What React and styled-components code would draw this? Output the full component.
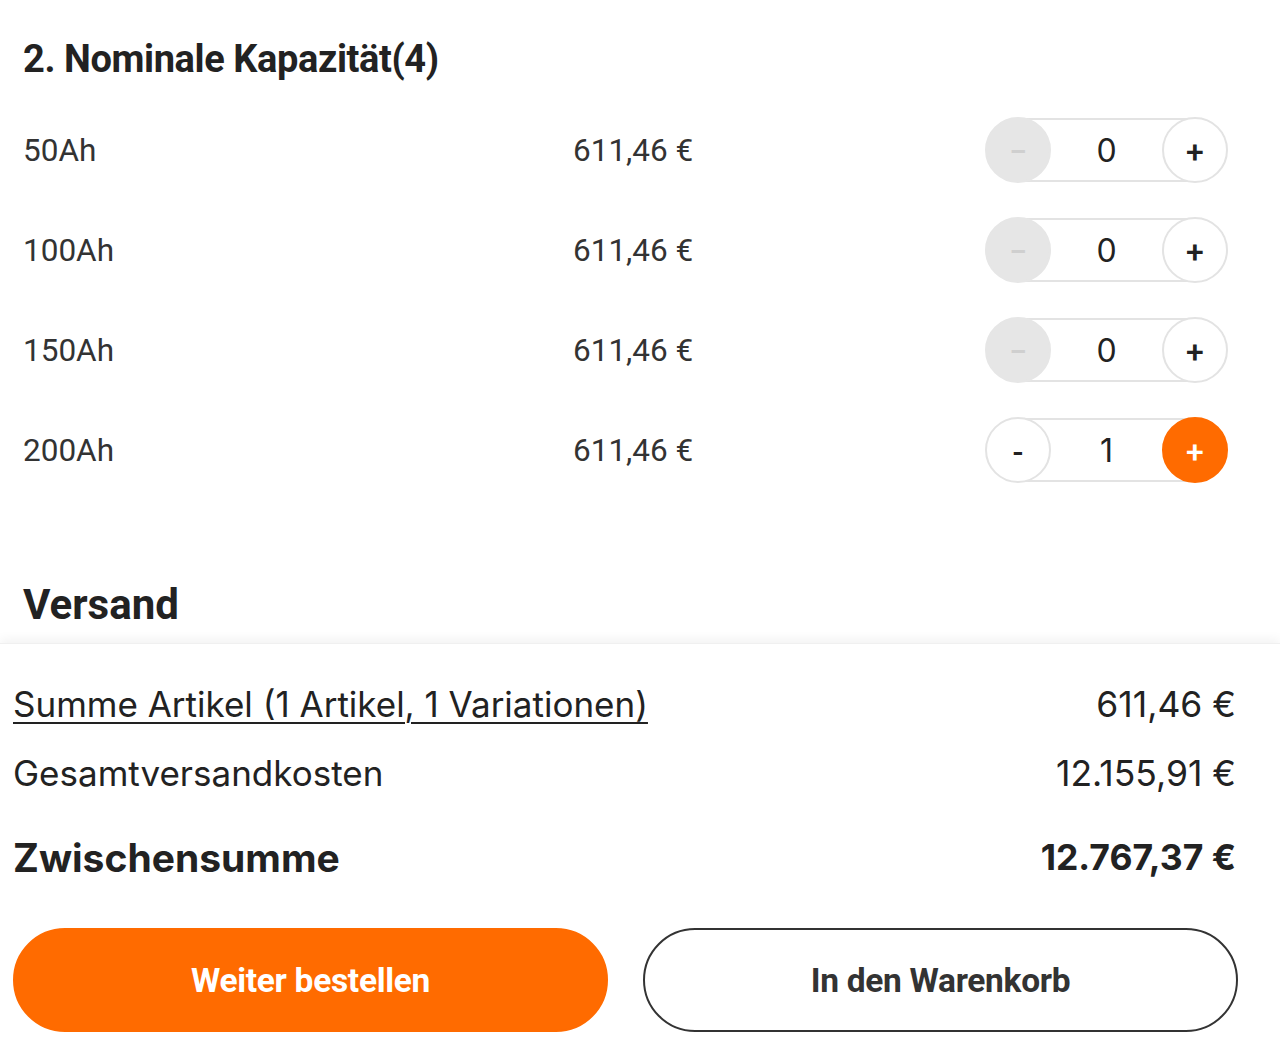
import React, { useState } from 'react';
import styled, { createGlobalStyle } from 'styled-components';

const GlobalStyle = createGlobalStyle`
	html, body {
		margin: 0;
		padding: 0;
		background: #fff;
	}
	body {
		font-family: Roboto, "Liberation Sans", sans-serif;
		color: #222;
	}
`;

const Page = styled.div`
	width: 1280px;
	height: 1049px;
	display: flex;
	flex-direction: column;
	overflow: hidden;
`;

const Options = styled.section`
	padding: 24px 53px 13px 23px;
`;

const Title = styled.h2`
	margin: 0 0 6px;
	height: 70px;
	line-height: 70px;
	font-size: 38px;
	font-weight: 700;
	letter-spacing: -0.4px;
	color: #222;
`;

const Row = styled.div`
	display: grid;
	grid-template-columns: 550px 1fr auto;
	align-items: center;
	height: 100px;
`;

const Label = styled.span`
	font-size: 31.5px;
	color: #333;
`;

const Stepper = styled.div`
	display: flex;
	align-items: center;
	justify-content: space-between;
	width: 241px;
	height: 64px;
	box-sizing: border-box;
	border: 2px solid #e3e3e3;
	border-radius: 32px;
`;

const StepButton = styled.button`
	width: 66px;
	height: 66px;
	margin: -3px;
	box-sizing: border-box;
	border-radius: 50%;
	border: 2px solid ${p => (p.$active ? '#ff6b00' : p.$disabled ? '#e6e6e6' : '#e3e3e3')};
	background: ${p => (p.$active ? '#ff6b00' : p.$disabled ? '#e6e6e6' : '#fff')};
	color: ${p => (p.$active ? '#fff' : p.$disabled ? '#cfcfcf' : '#222')};
	font-family: Roboto, sans-serif;
	font-size: 32px;
	font-weight: 500;
	line-height: 1;
	padding: 4px 0 0;
	display: flex;
	align-items: center;
	justify-content: center;
	cursor: pointer;
`;

const Count = styled.span`
	font-family: Inter, sans-serif;
	font-size: 32px;
	color: #222;
`;

const Heading = styled.h3`
	margin: 80px 0 0;
	height: 50px;
	line-height: 50px;
	font-size: 42px;
	font-weight: 700;
	color: #222;
`;

const Summary = styled.footer`
	flex: 1;
	padding: 37px 44px 0 13px;
	box-shadow: 0 -4px 10px rgba(0, 0, 0, 0.05);
	border-top: 1px solid #f0f0f0;
	font-family: Inter, sans-serif;
	color: #222;
`;

const SumRow = styled.div`
	display: flex;
	justify-content: space-between;
	align-items: center;
	height: ${p => (p.$total ? '52px' : '46px')};
	margin-top: ${p => p.$gap || 0}px;
	font-size: ${p => (p.$total ? '39px' : '35px')};
	font-weight: ${p => (p.$total ? 700 : 400)};
	color: #222;
`;

const LinkText = styled.a`
	color: #222;
	text-decoration: underline;
	text-underline-offset: 5px;
	text-decoration-thickness: 2px;
`;

const Amount = styled.span`
	font-size: 35.5px;
`;

const Actions = styled.div`
	display: flex;
	gap: 35px;
	margin-top: 45px;
	margin-right: -2px;
`;

const ActionButton = styled.button`
	flex: 1;
	height: 104px;
	border-radius: 52px;
	box-sizing: border-box;
	border: 2px solid ${p => (p.$primary ? '#ff6b00' : '#333')};
	background: ${p => (p.$primary ? '#ff6b00' : '#fff')};
	color: ${p => (p.$primary ? '#fff' : '#333')};
	font-family: Roboto, sans-serif;
	font-size: 33.5px;
	font-weight: 700;
	letter-spacing: -0.3px;
	cursor: pointer;
`;

const items = [
	{ name: '50Ah', price: '611,46 €', qty: 0 },
	{ name: '100Ah', price: '611,46 €', qty: 0 },
	{ name: '150Ah', price: '611,46 €', qty: 0 },
	{ name: '200Ah', price: '611,46 €', qty: 1 },
];

const App = () => {
	const [rows, setRows] = useState(items);

	const change = (index, delta) => {
		setRows(prev => prev.map((r, i) => (i === index ? { ...r, qty: Math.max(0, r.qty + delta) } : r)));
	};

	return (
		<Page>
			<GlobalStyle />
			<Options>
				<Title>2. Nominale Kapazität(4)</Title>
				{rows.map((r, i) => (
					<Row key={r.name}>
						<Label>{r.name}</Label>
						<Label>{r.price}</Label>
						<Stepper>
							<StepButton $disabled={r.qty === 0} onClick={() => change(i, -1)}>
								{r.qty === 0 ? '−' : '-'}
							</StepButton>
							<Count>{r.qty}</Count>
							<StepButton $active={r.qty > 0} onClick={() => change(i, 1)}>+</StepButton>
						</Stepper>
					</Row>
				))}
				<Heading>Versand</Heading>
			</Options>
			<Summary>
				<SumRow>
					<LinkText>Summe Artikel (1 Artikel, 1 Variationen)</LinkText>
					<Amount>611,46 €</Amount>
				</SumRow>
				<SumRow $gap={23}>
					<span>Gesamtversandkosten</span>
					<Amount>12.155,91 €</Amount>
				</SumRow>
				<SumRow $gap={35} $total>
					<span>Zwischensumme</span>
					<Amount>12.767,37 €</Amount>
				</SumRow>
				<Actions>
					<ActionButton $primary>Weiter bestellen</ActionButton>
					<ActionButton>In den Warenkorb</ActionButton>
				</Actions>
			</Summary>
		</Page>
	);
};

export default App;
